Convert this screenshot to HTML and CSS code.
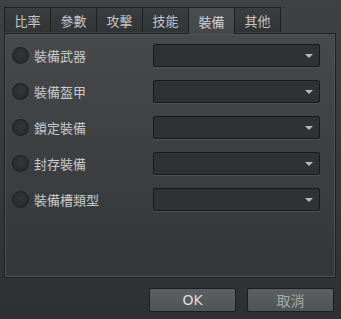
FILE: index.html
```html
<!DOCTYPE html>
<html lang="zh-Hant">
<head>
    <meta charset="UTF-8">
    <meta name="viewport" content="width=device-width, initial-scale=1.0">
    <title>裝備</title>
    <link rel="stylesheet" href="styles.css">
</head>
<body>

    <div class="dialog">
        <div class="tabs">
            <div class="tab">比率</div>
            <div class="tab">參數</div>
            <div class="tab">攻擊</div>
            <div class="tab">技能</div>
            <div class="tab active">裝備</div>
            <div class="tab">其他</div>
        </div>

        <div class="panel">
            <div class="row">
                <label class="option"><span class="radio"></span>裝備武器</label>
                <div class="combo"><span class="arrow"></span></div>
            </div>
            <div class="row">
                <label class="option"><span class="radio"></span>裝備盔甲</label>
                <div class="combo"><span class="arrow"></span></div>
            </div>
            <div class="row">
                <label class="option"><span class="radio"></span>鎖定裝備</label>
                <div class="combo"><span class="arrow"></span></div>
            </div>
            <div class="row">
                <label class="option"><span class="radio"></span>封存裝備</label>
                <div class="combo"><span class="arrow"></span></div>
            </div>
            <div class="row">
                <label class="option"><span class="radio"></span>裝備槽類型</label>
                <div class="combo"><span class="arrow"></span></div>
            </div>
        </div>

        <div class="buttons">
            <button class="btn ok">OK</button>
            <button class="btn cancel">取消</button>
        </div>
    </div>

</body>
</html>
```

FILE: styles.css
```css
html, body {
    margin: 0;
    padding: 0;
}
body {
    width: 341px;
    height: 319px;
    overflow: hidden;
    font-family: "DejaVu Sans", "Noto Sans CJK TC", sans-serif;
    font-size: 13px;
    color: #c9cacb;
    background: linear-gradient(#3f4244, #2e3133);
}
.dialog {
    padding: 7px 5px 0 4px;
}
.tabs {
    display: flex;
    align-items: flex-end;
    height: 26px;
}
.tab {
    box-sizing: border-box;
    width: 47px;
    height: 25px;
    margin-left: -1px;
    margin-bottom: 1px;
    border: 1px solid #1d1f20;
    border-bottom: none;
    background: linear-gradient(#3b3e40, #323537);
    display: flex;
    align-items: center;
    justify-content: center;
    color: #c4c5c6;
    font-family: "Noto Sans CJK TC", sans-serif;
}
.tab:first-child {
    margin-left: 0;
}
.tab.active {
    height: 27px;
    margin-bottom: -1px;
    background: linear-gradient(#4a4d4f, #45484a);
    color: #d2d3d4;
    position: relative;
    z-index: 1;
}
.panel {
    box-sizing: border-box;
    width: 332px;
    height: 245px;
    border: 1px solid #1d1f20;
    box-shadow: inset 0 0 0 1px #505355;
    background: linear-gradient(#47494b, #333638);
    padding: 10px 15px 0 7px;
    display: flex;
    flex-direction: column;
    gap: 13px;
}
.row {
    display: grid;
    grid-template-columns: 141px 167px;
    height: 23px;
    align-items: center;
}
.option {
    display: flex;
    align-items: center;
    gap: 5px;
    font-family: "Noto Sans CJK TC", sans-serif;
    color: #c9cacb;
}
.radio {
    box-sizing: border-box;
    width: 17px;
    height: 17px;
    border-radius: 50%;
    border: 1px solid #1c1e1f;
    background: radial-gradient(circle at 50% 40%, #333638, #26282a);
}
.combo {
    box-sizing: border-box;
    height: 23px;
    border: 1px solid #17191a;
    border-radius: 2px;
    background: #2f3234;
    box-shadow: 0 1px 0 #4e5153;
    display: flex;
    align-items: center;
    justify-content: flex-end;
    padding-right: 6px;
}
.arrow {
    width: 0;
    height: 0;
    border-left: 4px solid transparent;
    border-right: 4px solid transparent;
    border-top: 4px solid #b9babb;
}
.buttons {
    display: flex;
    justify-content: flex-end;
    gap: 11px;
    margin-top: 10px;
    padding-right: 2px;
}
.btn {
    box-sizing: border-box;
    width: 87px;
    height: 24px;
    border: 1px solid #1c1e1f;
    border-radius: 2px;
    background: linear-gradient(#5c6062, #505456);
    font-size: 14px;
    padding: 0;
}
.ok {
    color: #dcdddd;
    font-family: "DejaVu Sans", sans-serif;
}
.cancel {
    color: #a6a8a9;
    font-family: "Noto Sans CJK TC", sans-serif;
}
```
